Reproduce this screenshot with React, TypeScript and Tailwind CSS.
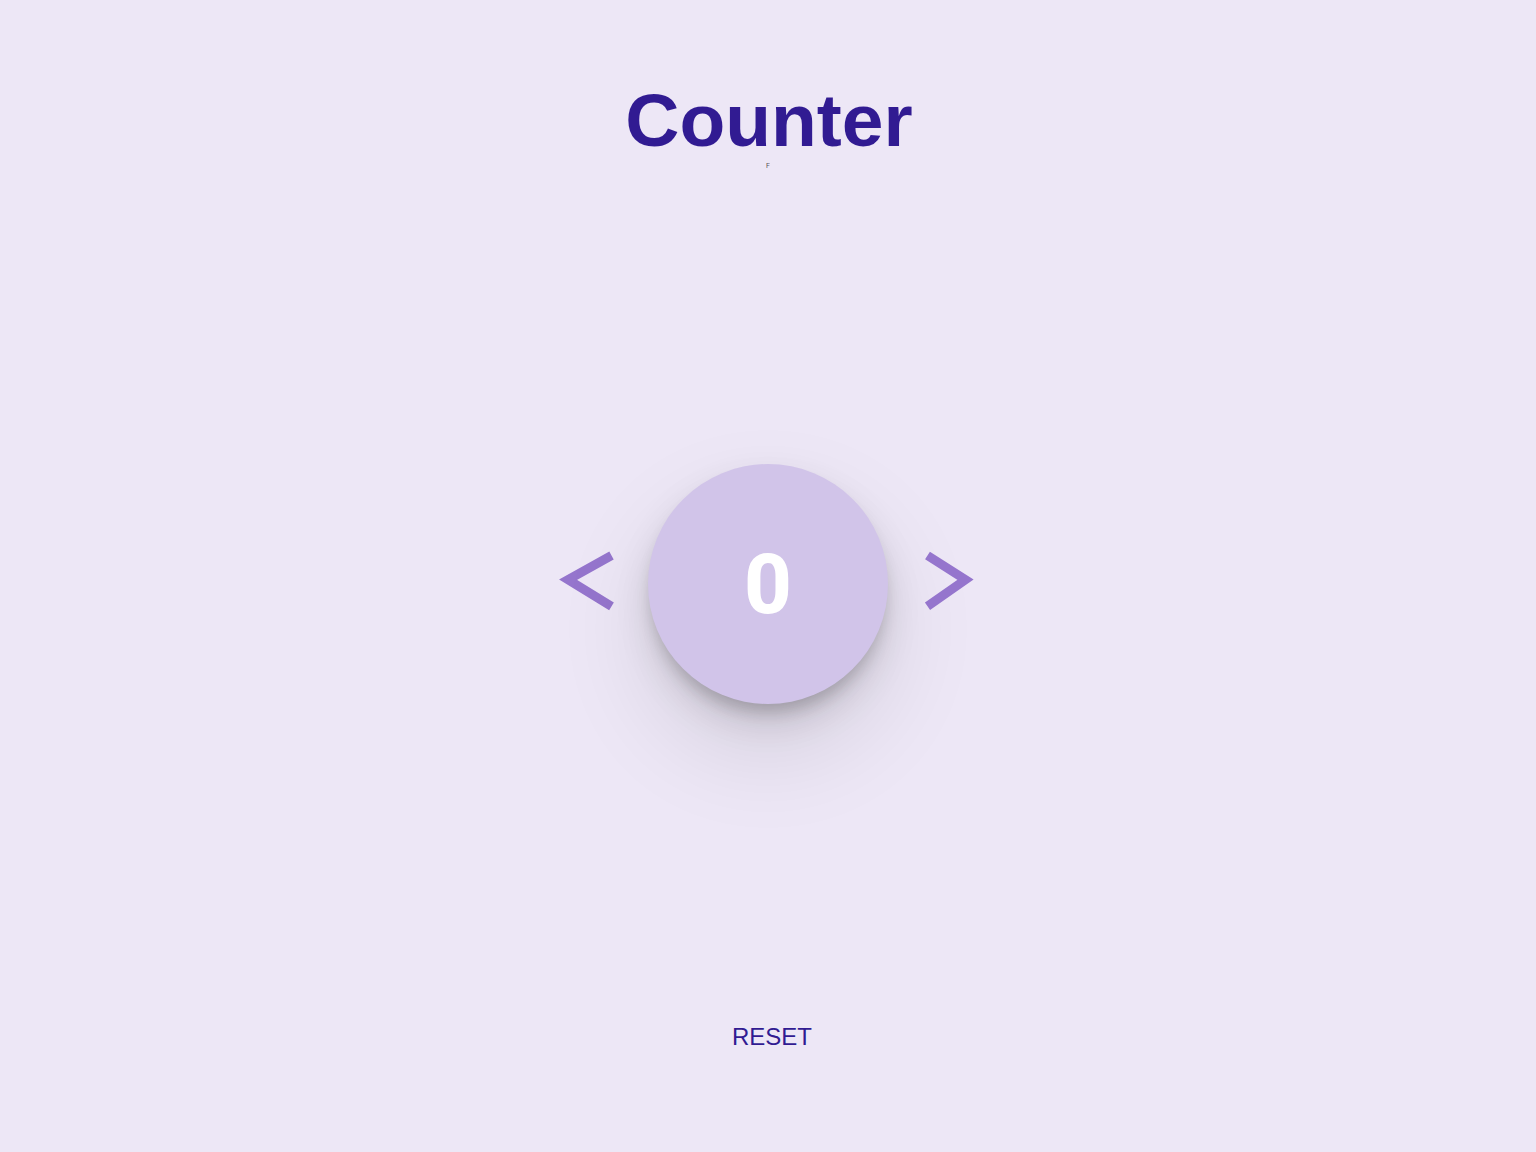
import { useState } from "react";

export default function App() {
  const [count, setCount] = useState(0);

  return (
    <main className="flex min-h-screen flex-col items-center justify-between bg-[#ede7f6] pt-20 pb-[74px] font-['Liberation_Sans',Arial,sans-serif] text-[#311b92]">
      <header className="flex flex-col items-center">
        <h1 className="pl-0.5 text-[75px] leading-20 font-bold">Counter</h1>
        <p className="font-['Roboto'] text-[7px] leading-3 text-black/70">F</p>
      </header>

      <section className="flex items-center justify-center gap-8" aria-label="Counter value">
        <button type="button" aria-label="Decrease" onClick={() => setCount(count - 1)} className="cursor-pointer">
          <svg width="60" height="70" viewBox="0 0 60 70" fill="none" stroke="#9575cd" strokeWidth="9">
            <path d="M55.5 6.5 L12 30.7 L55.5 57.3" strokeMiterlimit="10" />
          </svg>
        </button>
        <output className="flex size-60 items-center justify-center rounded-full bg-[#d1c4e9] font-['Roboto'] text-[83px] leading-none font-extrabold text-white shadow-[0_45px_100px_rgba(0,0,0,0.11),0_18px_36px_rgba(0,0,0,0.11),0_12px_16px_-4px_rgba(0,0,0,0.18)]">
          {count}
        </output>
        <button type="button" aria-label="Increase" onClick={() => setCount(count + 1)} className="cursor-pointer">
          <svg width="60" height="70" viewBox="0 0 60 70" fill="none" stroke="#9575cd" strokeWidth="9">
            <path d="M7.5 6.5 L45.5 30.7 L7.5 57.3" strokeMiterlimit="10" />
          </svg>
        </button>
      </section>

      <button type="button" onClick={() => setCount(0)} className="cursor-pointer py-6 pl-2 text-2xl leading-[34px]">
        RESET
      </button>
    </main>
  );
}
